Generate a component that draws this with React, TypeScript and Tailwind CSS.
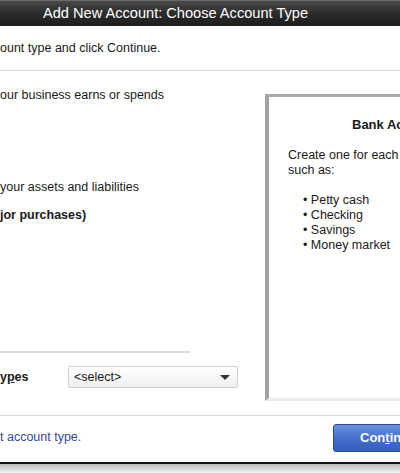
import React from "react";

const bullets = ["Petty cash", "Checking", "Savings", "Money market"];

const App: React.FC = () => {
  return (
    <div className="w-[400px] h-[473px] overflow-hidden bg-white flex flex-col font-['Liberation_Sans',Arial,sans-serif] text-[12.5px] text-[#1a1a1a]">
      {/* Title bar */}
      <div className="h-[26px] shrink-0 flex items-center pl-[43px] bg-gradient-to-b from-[#4a4a4a] via-[#2c2c2c] to-[#1d1d1d] border-t border-[#6a6a6a]">
        <span className="text-white text-[14.6px] leading-none whitespace-nowrap">
          Add New Account: Choose Account Type
        </span>
      </div>

      {/* Instruction */}
      <div className="h-[45px] shrink-0 pt-[15px] leading-[15px] whitespace-nowrap border-b border-[#d9d9d9]">
        ount type and click Continue.
      </div>

      {/* Main */}
      <div className="flex h-[344px] shrink-0">
        <div className="w-[265px] shrink-0 flex flex-col leading-[15px] whitespace-nowrap">
          <div className="mt-[17px]">our business earns or spends</div>
          <div className="mt-[77px]">your assets and liabilities</div>
          <div className="mt-[13px] font-bold">jor purchases)</div>
          <div className="mt-[128px] h-[2px] w-[190px] bg-[#dcdcdc]" />
          <div className="mt-[13px] h-[22px] flex items-center">
            <span className="font-bold w-[68px]">
              y<span className="underline">p</span>es
            </span>
            <div className="w-[170px] h-[22px] flex items-center justify-between px-[5px] border border-[#cfcfcf] rounded-[2px] bg-gradient-to-b from-white to-[#efefef]">
              <span>&lt;select&gt;</span>
              <span className="w-0 h-0 border-l-[5px] border-r-[5px] border-t-[5px] border-l-transparent border-r-transparent border-t-[#333] mr-[2px]" />
            </div>
          </div>
        </div>

        <div className="mt-[23px] h-[307px] flex-1 border-l-[4px] border-t-[3px] border-b-[3px] border-l-[#a3a3a3] border-t-[#a8a8a8] border-b-[#ececec] bg-white overflow-hidden leading-[15px] whitespace-nowrap">
          <div className="mt-[20px] pl-[83px] font-bold text-[13px]">Bank Account</div>
          <div className="mt-[16px] pl-[19px]">
            Create one for each cash account,
            <br />
            such as:
          </div>
          <ul className="mt-[15px] pl-[34px]">
            {bullets.map((b) => (
              <li key={b}>• {b}</li>
            ))}
          </ul>
        </div>
      </div>

      {/* Footer */}
      <div className="h-[47px] shrink-0 flex items-start border-t border-[#d9d9d9] overflow-hidden">
        <div className="mt-[14px] leading-[15px] whitespace-nowrap text-[#34489e]">
          t account type.
        </div>
        <button className="ml-auto mt-[8px] -mr-[30px] w-[97px] h-[28px] rounded-[3px] border border-[#2a4a98] bg-gradient-to-b from-[#6890dc] via-[#4470cc] to-[#3560bd] text-white font-bold text-[13px] text-left pl-[26px] whitespace-nowrap">
          Con<span className="underline">t</span>inue
        </button>
      </div>

      {/* Window bottom edge and shadow */}
      <div className="h-[2px] shrink-0 bg-[#111]" />
      <div className="flex-1 bg-gradient-to-b from-[#b8b8b8] to-[#f4f4f4]" />
    </div>
  );
};

export default App;
